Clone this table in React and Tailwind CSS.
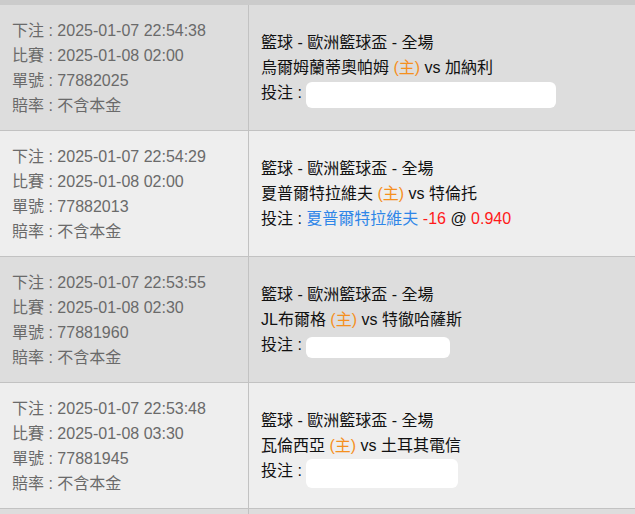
import React from 'react';

const rows = [
  {
    placed: '2025-01-07 22:54:38',
    match: '2025-01-08 02:00',
    no: '77882025',
    league: '籃球 - 歐洲籃球盃 - 全場',
    home: '烏爾姆蘭蒂奧帕姆',
    away: '加納利',
    mask: 'w-[250px] h-[26px] mt-[2px]',
    bg: 'bg-[#dddddd]',
  },
  {
    placed: '2025-01-07 22:54:29',
    match: '2025-01-08 02:00',
    no: '77882013',
    league: '籃球 - 歐洲籃球盃 - 全場',
    home: '夏普爾特拉維夫',
    away: '特倫托',
    pick: { team: '夏普爾特拉維夫', line: '-16', odds: '0.940' },
    bg: 'bg-[#eeeeee]',
  },
  {
    placed: '2025-01-07 22:53:55',
    match: '2025-01-08 02:30',
    no: '77881960',
    league: '籃球 - 歐洲籃球盃 - 全場',
    home: 'JL布爾格',
    away: '特徹哈薩斯',
    mask: 'w-[144px] h-[21px] mt-[5px]',
    bg: 'bg-[#dddddd]',
  },
  {
    placed: '2025-01-07 22:53:48',
    match: '2025-01-08 03:30',
    no: '77881945',
    league: '籃球 - 歐洲籃球盃 - 全場',
    home: '瓦倫西亞',
    away: '土耳其電信',
    mask: 'w-[152px] h-[29px] mt-[1px]',
    bg: 'bg-[#eeeeee]',
  },
];

const BetRow = ({ r }) => (
  <div className={`flex h-[126px] border-b border-[#c2c2c2] ${r.bg}`}>
    <div className="w-[249px] shrink-0 border-r border-[#c2c2c2] px-3 flex flex-col justify-center text-[#6a6a6a]">
      <div>下注 : {r.placed}</div>
      <div>比賽 : {r.match}</div>
      <div>單號 : {r.no}</div>
      <div>賠率 : 不含本金</div>
    </div>
    <div className="flex-1 px-3 flex flex-col justify-center text-[#111111]">
      <div>{r.league}</div>
      <div>
        {r.home} <span className="text-[#f5901e]">(主)</span> vs {r.away}
      </div>
      <div className="flex items-start h-[25px]">
        <span>投注 :&nbsp;</span>
        {r.pick ? (
          <span>
            <span className="text-[#2f86e8]">{r.pick.team}</span>{' '}
            <span className="text-[#ff1a1a]">{r.pick.line}</span> @{' '}
            <span className="text-[#ff1a1a]">{r.pick.odds}</span>
          </span>
        ) : (
          <span className={`inline-block shrink-0 bg-white rounded-[6px] ${r.mask}`} />
        )}
      </div>
    </div>
  </div>
);

export default function App() {
  return (
    <div
      className="w-[635px] h-[514px] overflow-hidden bg-[#dddddd] text-[16px] leading-[25px]"
      style={{ fontFamily: '"Liberation Sans", "Noto Sans CJK TC", sans-serif' }}
    >
      <div className="h-[5px] bg-[#cbcbcb]" />
      {rows.map((r) => (
        <BetRow key={r.no} r={r} />
      ))}
      <div className="flex h-[20px] bg-[#dddddd]">
        <div className="w-[249px] border-r border-[#c2c2c2]" />
      </div>
    </div>
  );
}
